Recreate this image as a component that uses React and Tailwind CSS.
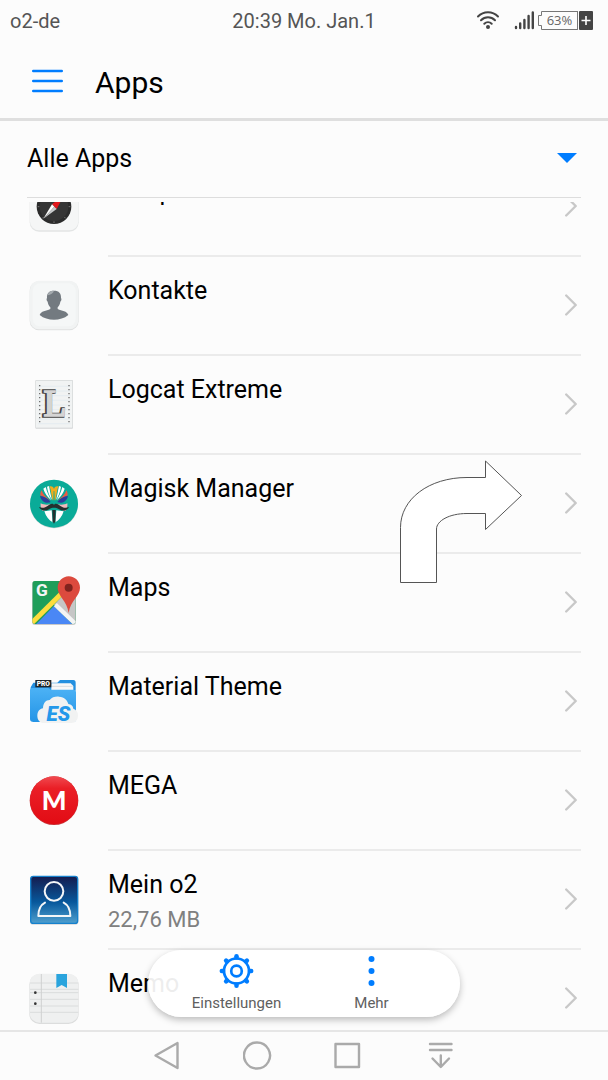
import { useState } from 'react';

const CompassIcon = () => (
    <>
        <rect x="5" y="6" width="147" height="146" rx="28" fill="#e3e5e5" />
        <rect x="6" y="4" width="145" height="144" rx="27" fill="#f5f6f6" />
        <circle cx="78" cy="77" r="52" fill="#2b2b2b" />
        <circle cx="78" cy="77" r="43" fill="#353535" />
        <path d="M78 121v5M34 77h-5M122 77h5M47 108l-4 4M109 108l4 4" stroke="#9a9a9a" strokeWidth="2" />
        <path d="M72 70L110 39 86 84Z" fill="#e2171c" />
        <path d="M72 70L46 113 79 77Z" fill="#ffffff" />
        <path d="M86 84L46 113 79 77Z" fill="#c9cbcc" />
    </>
);

const ContactsIcon = () => (
    <>
        <rect x="5" y="4" width="147" height="147" rx="28" fill="#dfe1e1" />
        <rect x="6" y="2" width="145" height="146" rx="27" fill="#f1f3f3" />
        <rect x="14" y="10" width="129" height="129" rx="22" fill="#f5f7f7" />
        <path d="M78 32c15 0 22 8 21 22 2 2 2 8-2 11-1 8-4 13-8 17v5c12 6 29 6 32 18-12 10-27 14-43 14s-31-4-43-14c3-12 20-12 32-18v-5c-4-4-7-9-8-17-4-3-4-9-2-11-1-14 6-22 21-22Z" fill="#737a80" />
        <path d="M59 46c1-9 8-14 19-14-2 8-10 12-19 14Z" fill="#a4aaae" />
    </>
);

const LogcatIcon = () => (
    <>
        <rect x="22" y="3" width="113" height="146" rx="3" fill="#d3d5d6" />
        <rect x="24" y="5" width="109" height="141" fill="#f1f3f3" />
        <path d="M30 22H127M30 36H127M30 50H127M30 64H127M30 78H127M30 92H127M30 106H127M30 120H127M30 134H127" stroke="#dfe9ef" strokeWidth="2" />
        <path d="M35 18V134M123 18V134" stroke="#6f6f6f" strokeWidth="4" strokeDasharray="4 8" />
        <text x="78" y="112" textAnchor="middle" fontFamily="'Liberation Serif', serif" fontWeight="400" fontSize="112" fill="#444444" stroke="#444444" strokeWidth="10">L</text>
        <text x="81" y="111" textAnchor="middle" fontFamily="'Liberation Serif', serif" fontWeight="400" fontSize="112" fill="#d4d4d4" stroke="#d4d4d4" strokeWidth="5">L</text>
    </>
);

const MagiskIcon = () => (
    <>
        <circle cx="78" cy="79" r="72" fill="#c9d4d2" />
        <circle cx="78" cy="77" r="72" fill="#0aab98" />
        <path d="M38 76c9 5 20 5 30 3l2 7c-8 7-17 12-27 12-4-6-6-14-5-22ZM118 76c-9 5-20 5-30 3l-2 7c8 7 17 12 27 12 4-6 6-14 5-22Z" fill="#f2b8bb" />
        <path d="M41 37c3 11 13 22 28 31L37 52c0-6 1-11 4-15ZM115 37c-3 11-13 22-28 31l32-16c0-6-1-11-4-15Z" fill="#ea5a45" />
        <path d="M46 32l7-5c4 14 9 26 17 40C58 57 50 46 46 32ZM110 32l-7-5c-4 14-9 26-17 40 12-10 20-21 24-35Z" fill="#ffffff" />
        <path d="M57 26l6-2c3 14 5 28 9 42-8-12-13-26-15-40ZM99 26l-6-2c-3 14-5 28-9 42 8-12 13-26 15-40Z" fill="#ffffff" />
        <path d="M64 25c8-2 13 2 14 8 1-6 6-10 14-8-5 6-5 24-10 42h-2l-1-28h-2l-1 28h-2C69 49 69 31 64 25Z" fill="#f1ac1d" />
        <path d="M36 54c12 1 24 7 32 18-9 5-27 3-32-18ZM120 54c-12 1-24 7-32 18 9 5 27 3 32-18Z" fill="#2c3d99" />
        <path d="M49 100l22-3 3 36c-11-6-20-17-25-33ZM107 100l-22-3-3 36c11-6 20-17 25-33Z" fill="#ffffff" />
        <path d="M33 87c10 5 20 2 31-7 6-4 12-4 14 1 2-5 8-5 14-1 11 9 21 12 31 7-5 11-19 14-30 7-6-4-10-5-15-5s-9 1-15 5c-11 7-25 4-30-7Z" fill="#25302f" />
        <path d="M73 96h10l-1 34-4 7-4-7Z" fill="#25302f" />
    </>
);

const MapsIcon = () => (
    <>
        <rect x="12" y="13" width="132" height="131" rx="9" fill="#c8c8c8" />
        <clipPath id="mapClip">
            <rect x="13" y="12" width="130" height="129" rx="8" />
        </clipPath>
        <g clipPath="url(#mapClip)">
            <rect x="13" y="12" width="130" height="129" fill="#1f9e5a" />
            <path d="M78 83L120 40H143V141Z" fill="#c6c6c6" />
            <path d="M78 87L20 146H138Z" fill="#4a87f5" />
            <path d="M10 139L112 38" stroke="#fddd3d" strokeWidth="15" />
            <path d="M82 83L148 146" stroke="#f4f4f4" strokeWidth="13" />
        </g>
        <text x="42" y="58" textAnchor="middle" fontFamily="Roboto, sans-serif" fontWeight="700" fontSize="52" fill="#f5f5f5">G</text>
        <path d="M122-2c19 0 34 15 34 34 0 26-29 38-34 76-5-38-33-50-33-76 0-19 15-34 33-34Z" fill="#dc4a3e" />
        <circle cx="122" cy="32" r="12" fill="#80231e" />
    </>
);

const EsIcon = () => (
    <>
        <linearGradient id="esFolder" x1="0" y1="0" x2="0" y2="1">
            <stop offset="0" stopColor="#4cb2f5" />
            <stop offset="1" stopColor="#2494e6" />
        </linearGradient>
        <path d="M8 34l8-14h72l8-8h40q7 0 7 8v24H8Z" fill="#2490e0" />
        <path d="M70 22h58l8 8v14H70Z" fill="#f8f8f8" />
        <path d="M72 31h62" stroke="#d8dde0" strokeWidth="3" />
        <path d="M6 42q0-6 7-6h48l7 5h67q9 0 9 8v81q0 8-9 8H17q-11 0-11-9Z" fill="url(#esFolder)" />
        <rect x="22" y="12" width="48" height="22" fill="#1f2427" />
        <text x="46" y="30" textAnchor="middle" fontFamily="Roboto, sans-serif" fontWeight="900" fontSize="20" fill="#ffffff">PRO</text>
        <path d="M48 141c-12 0-20-9-20-22s7-20 17-22c0-15 8-25 20-25 6-8 17-11 28-10 17 1 25 11 28 22 9 1 14 6 15 14 9 3 14 10 14 20 0 14-8 23-20 23Z" fill="#f1f2f2" />
        <text x="91" y="134" textAnchor="middle" fontFamily="Roboto, sans-serif" fontStyle="italic" fontWeight="900" fontSize="62" fill="#2398ea">ES</text>
    </>
);

const MegaIcon = () => (
    <>
        <linearGradient id="megaRed" x1="0" y1="0" x2="0" y2="1">
            <stop offset="0" stopColor="#f04a50" />
            <stop offset="0.25" stopColor="#ea1f26" />
            <stop offset="1" stopColor="#e20b14" />
        </linearGradient>
        <circle cx="78" cy="77" r="73" fill="#c9353a" />
        <circle cx="78" cy="76" r="72" fill="url(#megaRed)" />
        <text x="78" y="106" textAnchor="middle" fontFamily="Lato, sans-serif" fontWeight="900" fontSize="78" fill="#ffffff">M</text>
    </>
);

const O2Icon = () => (
    <>
        <linearGradient id="o2Blue" x1="0" y1="0" x2="0" y2="1">
            <stop offset="0" stopColor="#151c4f" />
            <stop offset="0.55" stopColor="#07589c" />
            <stop offset="1" stopColor="#4f9fce" />
        </linearGradient>
        <rect x="6" y="8" width="145" height="144" rx="9" fill="#d5d5d5" />
        <rect x="8" y="7" width="141" height="141" rx="8" fill="url(#o2Blue)" stroke="#1681cc" strokeWidth="4" />
        <circle cx="78" cy="52" r="28" fill="none" stroke="#f4f6f8" strokeWidth="6" />
        <path d="M51 86c-13 7-20 18-20 40h96c0-22-7-33-20-40" fill="none" stroke="#f4f6f8" strokeWidth="6" strokeLinecap="round" strokeLinejoin="round" />
    </>
);

const MemoIcon = () => (
    <>
        <rect x="4" y="4" width="148" height="149" rx="30" fill="#dcdddd" />
        <rect x="5" y="2" width="146" height="147" rx="29" fill="#eff0f0" />
        <path d="M6 30H151M6 49H151M6 59H151M6 79H151M6 99H151M6 118H151" stroke="#dadcdc" strokeWidth="3" />
        <path d="M40 3V149" stroke="#cfd1d1" strokeWidth="3" />
        <circle cx="22" cy="59" r="4" fill="#333333" />
        <circle cx="22" cy="92" r="4" fill="#333333" />
        <path d="M85 3h32v42l-16-9-16 9Z" fill="#2aa4dd" />
    </>
);

const apps = [
    { name: 'Kompass', Icon: CompassIcon },
    { name: 'Kontakte', Icon: ContactsIcon },
    { name: 'Logcat Extreme', Icon: LogcatIcon },
    { name: 'Magisk Manager', Icon: MagiskIcon },
    { name: 'Maps', Icon: MapsIcon },
    { name: 'Material Theme', Icon: EsIcon },
    { name: 'MEGA', Icon: MegaIcon },
    { name: 'Mein o2', size: '22,76 MB', Icon: O2Icon },
    { name: 'Memo', Icon: MemoIcon },
];

const StatusBar = () => (
    <div className="grid h-10 grid-cols-[1fr_auto_1fr] items-center text-xl text-[#555555]">
        <span className="pt-0.5 pl-[10px]">o2-de</span>
        <span className="pt-0.5">20:39 Mo. Jan.1</span>
        <div className="flex items-center justify-end pr-[15px]">
            <svg viewBox="0 0 24 20" className="mr-[14px] h-5 w-6" fill="none" stroke="#444444" strokeWidth="2" strokeLinecap="round">
                <path d="M2 6.500C7.500.8 16.500.8 22 6.500M5 10.200c4-4 10-4 14 0M8.300 13.800c2.200-2.200 5.200-2.200 7.400 0" />
                <circle cx="12" cy="17" r="2" fill="#444444" stroke="none" />
            </svg>
            <svg viewBox="0 0 20 20" className="mr-1 h-5 w-5" stroke="#444444" strokeWidth="2.400" strokeLinecap="round">
                <path d="M2 18v-1M6.200 18v-4.500M10.400 18V10M14.600 18V6M18.800 18V2.500" />
            </svg>
            <svg viewBox="0 0 4 19" className="h-[19px] w-1" fill="none" stroke="#777777">
                <path d="M4 .5H3.500V4.500H.5V14.500H3.500V18.500H4" />
            </svg>
            <span className="flex h-[19px] w-9 items-center justify-center border-y border-r border-[#777777] font-['Open_Sans',sans-serif] text-[13px] text-[#666666]">63%</span>
            <svg viewBox="0 0 15 19" className="h-[19px] w-[15px]">
                <rect x="1" width="14" height="19" rx="1" fill="#444444" />
                <path d="M8 5v9M3.500 9.500h9" stroke="#ffffff" strokeWidth="1.600" />
            </svg>
        </div>
    </div>
);

const AppRow = ({ name, size, Icon }) => (
    <li>
        <button className="flex h-[99px] w-full gap-[27px] text-left">
            <svg viewBox="-3 0 162 162" className="mt-[23px] size-[54px] shrink-0 overflow-visible">
                <Icon />
            </svg>
            <span className="flex h-full flex-1 items-center justify-between border-b-2 border-[#ebebeb] pr-1 pb-0.5">
                <span className="flex h-full flex-col pt-[18px]">
                    <span className="text-[25px] leading-8 text-black">{name}</span>
                    {size && <span className="mt-[5px] text-[22px] leading-7 text-[#808080]">{size}</span>}
                </span>
                <svg viewBox="0 0 12 22" className="h-[22px] w-3" fill="none" stroke="#c8c8c8" strokeWidth="2.400" strokeLinecap="round" strokeLinejoin="round">
                    <path d="M1.200 1.500L10.700 11 1.200 20.500" />
                </svg>
            </span>
        </button>
    </li>
);

const GearIcon = () => (
    <svg viewBox="0 0 36 36" className="size-9" fill="none" stroke="#007dff">
        <circle cx="17.500" cy="18" r="12.500" strokeWidth="2.700" />
        <circle cx="17.500" cy="18" r="5.300" strokeWidth="2.700" />
        {[0, 45, 90, 135, 180, 225, 270, 315].map((deg) => (
            <path key={deg} d="M17.500 4.500V3.300" strokeWidth="4.500" strokeLinecap="round" transform={`rotate(${deg} 17.5 18)`} />
        ))}
    </svg>
);

const ActionBar = () => (
    <div className="absolute bottom-[13px] left-1/2 flex h-[67px] w-[312px] -translate-x-1/2 justify-center rounded-full bg-white/93 text-[15px] leading-5 text-[#606060] shadow-[0_3px_7px_rgba(0,0,0,0.25)]">
        <button className="flex w-[135px] flex-col items-center gap-1 pt-[3px]">
            <GearIcon />
            Einstellungen
        </button>
        <button className="flex w-[135px] flex-col items-center gap-1 pt-[3px]">
            <svg viewBox="0 0 36 36" className="size-9" fill="#007dff">
                <circle cx="17.500" cy="6" r="3" />
                <circle cx="17.500" cy="18" r="3" />
                <circle cx="17.500" cy="30" r="3" />
            </svg>
            Mehr
        </button>
    </div>
);

const navButtons = [
    { label: 'Zurück', d: 'M3.500 15.500L25.500 3V28Z' },
    { label: 'Startseite', d: 'M14 2.500a13 13 0 1 0 .01 0Z' },
    { label: 'Letzte Apps', d: 'M1.500 4H25V27H1.500Z' },
    { label: 'Leiste ausblenden', d: 'M5 4H26.500M5 10H26.500M15.800 15.500V26.500M7.500 18.500L15.800 27 24 18.500' },
];

const NavBar = () => (
    <nav className="flex h-[50px] shrink-0 items-center justify-center border-t-2 border-[#e6e6e6]">
        {navButtons.map(({ label, d }) => (
            <button key={label} aria-label={label} className="flex h-12 w-[91px] items-center justify-center">
                <svg viewBox="0 0 32 32" className="size-8" fill="none" stroke="#aaaaaa" strokeWidth="2.400" strokeLinecap="round" strokeLinejoin="round">
                    <path d={d} />
                </svg>
            </button>
        ))}
    </nav>
);

const App = () => {
    const [filter, setFilter] = useState('alle');

    return (
        <div className="flex h-screen flex-col bg-[#fcfcfc] font-[Roboto,sans-serif]">
            <header className="shrink-0 border-b-3 border-[#dfdfdf]">
                <StatusBar />
                <div className="flex h-[78px] items-center gap-8 pt-1 pl-8">
                    <button aria-label="Menü">
                        <svg viewBox="0 0 31 24" className="h-6 w-[31px]" stroke="#007dff" strokeWidth="2.400" strokeLinecap="round">
                            <path d="M1.200 2H29.800M1.200 12H29.800M1.200 22H29.800" />
                        </svg>
                    </button>
                    <h1 className="pt-1 text-[30px] leading-9 text-black">Apps</h1>
                </div>
            </header>

            <div className="relative mx-[27px] h-[77px] shrink-0 border-b border-[#dddddd]">
                <select
                    aria-label="Apps filtern"
                    value={filter}
                    onChange={(e) => setFilter(e.target.value)}
                    className="h-full w-full appearance-none bg-transparent text-[25px] text-black"
                >
                    <option value="alle">Alle Apps</option>
                </select>
                <svg viewBox="0 0 20 10" className="pointer-events-none absolute top-8 right-1 h-[10px] w-5" fill="#007dff">
                    <path d="M0 0H20L10 10Z" />
                </svg>
            </div>

            <main className="relative mt-1 min-h-0 flex-1 overflow-hidden">
                {/* list is scrolled a little, so the first row is cut off */}
                <ul className="-mt-11 px-[27px]">
                    {apps.map((app) => (
                        <AppRow key={app.name} {...app} />
                    ))}
                </ul>
                <svg viewBox="0 0 124 124" className="pointer-events-none absolute top-[257px] right-[85px] size-[124px]" fill="#ffffff" stroke="#555555">
                    <path d="M1.500 123.500V68.500C1.500 40 30 18.500 68 18.500H86.500V2L122.500 36.500 86.500 70.500V54.500H68C50 54.500 37.500 62 37.500 70V123.500Z" />
                </svg>
                <ActionBar />
            </main>

            <NavBar />
        </div>
    );
};

export default App;
